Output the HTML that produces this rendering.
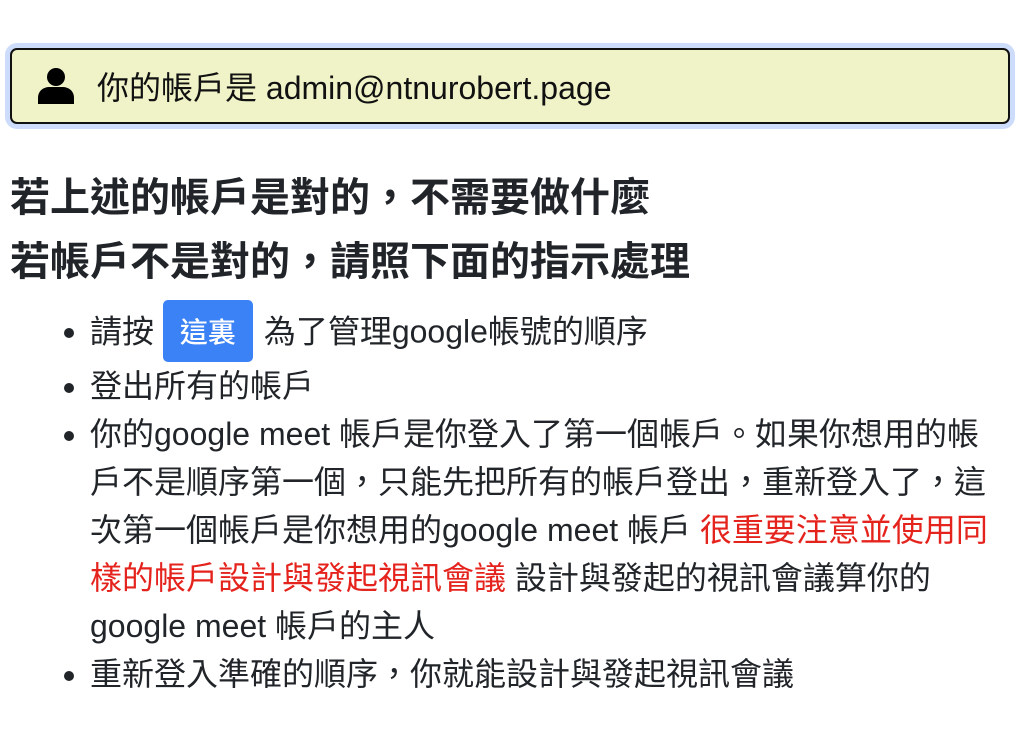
<!DOCTYPE html>
<html><head><meta charset="utf-8"><style>
body{margin:0;background:#fff;font-family:"Liberation Sans","Noto Sans CJK TC",sans-serif;color:#212529;}
.box{position:absolute;left:10px;top:48px;width:996px;height:72px;background:#f0f3c8;border:2px solid #111;border-radius:7px;box-shadow:0 0 0 5px #cddcfa;}
.box svg{position:absolute;left:24px;top:16px;}
.box span{position:absolute;left:85px;top:18px;font-size:32px;line-height:40px;color:#111;}
h{display:block;position:absolute;left:10px;font-size:40px;font-weight:bold;line-height:64px;}
ul{position:absolute;left:0;top:306px;margin:0;padding-left:90px;width:1000px;font-size:32px;line-height:48px;white-space:nowrap;}
li{margin:0;}
.btn{display:inline-block;background:#3b82f6;color:#fff;border-radius:5px;padding:0 17px;line-height:62px;font-size:28px;font-family:"Noto Sans CJK TC",sans-serif;font-weight:500;vertical-align:middle;margin:-6px 2px 0 0;}
.red{color:#e5231d;}
</style></head><body>
<div class="box"><svg width="40" height="40" viewBox="0 0 40 40"><circle cx="20" cy="11" r="9" fill="#000"/><path d="M2 38 v-6 c0-7 5-11 12-11 h12 c7 0 12 4 12 11 v6 z" fill="#000"/></svg><span>你的帳戶是 admin@ntnurobert.page</span></div>
<h style="top:166px">若上述的帳戶是對的，不需要做什麼</h>
<h style="top:230px">若帳戶不是對的，請照下面的指示處理</h>
<ul>
<li>請按 <span class="btn">這裏</span> 為了管理google帳號的順序</li>
<li>登出所有的帳戶</li>
<li>你的google meet 帳戶是你登入了第一個帳戶。如果你想用的帳<br>戶不是順序第一個，只能先把所有的帳戶登出，重新登入了，這<br>次第一個帳戶是你想用的google meet 帳戶 <span class="red">很重要注意並使用同<br>樣的帳戶設計與發起視訊會議</span> 設計與發起的視訊會議算你的<br>google meet 帳戶的主人</li>
<li>重新登入準確的順序，你就能設計與發起視訊會議</li>
</ul>
</body></html>
